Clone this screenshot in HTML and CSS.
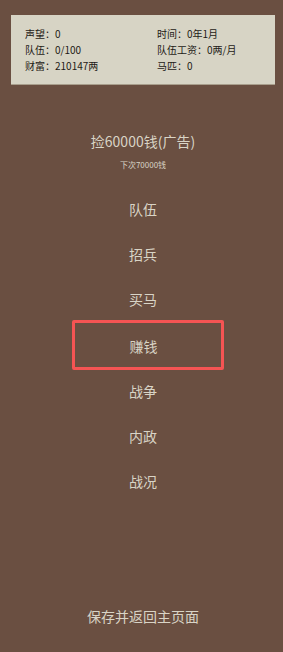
FILE: index.html
```html
<!DOCTYPE html>
<html lang="zh">
<head>
  <meta charset="UTF-8">
  <meta name="viewport" content="width=device-width, initial-scale=1.0">
  <title>主页面</title>
  <link rel="stylesheet" href="styles.css">
</head>
<body>
  <div class="status">
    <div class="status-col">
      <p>声望：0</p>
      <p>队伍：0/100</p>
      <p>财富：210147两</p>
    </div>
    <div class="status-col right">
      <p>时间：0年1月</p>
      <p>队伍工资：0两/月</p>
      <p>马匹：0</p>
    </div>
  </div>

  <div class="ad">
    <div class="ad-title">捡60000钱(广告)</div>
    <div class="ad-next">下次70000钱</div>
  </div>

  <div class="menu">
    <div class="menu-item">队伍</div>
    <div class="menu-item">招兵</div>
    <div class="menu-item">买马</div>
    <div class="menu-item selected">赚钱</div>
    <div class="menu-item">战争</div>
    <div class="menu-item">内政</div>
    <div class="menu-item">战况</div>
  </div>

  <div class="save">保存并返回主页面</div>
</body>
</html>
```

FILE: styles.css
```css
body {
  margin: 0;
  padding: 15px 8px 0 11px;
  height: 652px;
  box-sizing: border-box;
  background-color: #6a4f41;
  font-family: 'Noto Sans CJK SC', 'Noto Sans', sans-serif;
  color: #d9d4c6;
  overflow: hidden;
}
.status {
  display: flex;
  background-color: #d7d4c5;
  border-bottom: 1px solid #a89e8c;
  height: 70px;
  box-sizing: border-box;
  padding: 11px 0 0 14px;
  color: #1e1a16;
  font-size: 10px;
}
.status-col {
  width: 132px;
  flex-shrink: 0;
}
.status-col p {
  margin: 0;
  line-height: 16px;
}
.ad {
  text-align: center;
  margin-top: 44px;
}
.ad-title {
  font-size: 14px;
  line-height: 24px;
}
.ad-next {
  font-size: 8px;
  line-height: 14px;
  margin-top: 5px;
}
.menu {
  display: flex;
  flex-direction: column;
  align-items: center;
  margin-top: 15px;
}
.menu-item {
  font-size: 14px;
  line-height: 45px;
  height: 45px;
  width: 152px;
  text-align: center;
  box-sizing: border-box;
}
.menu-item.selected {
  border: 3px solid #f55453;
  border-radius: 2px;
  line-height: 46px;
  height: 50px;
  margin: -2px 0 -1px 10px;
  padding-right: 9px;
}
.save {
  text-align: center;
  font-size: 14px;
  line-height: 20px;
  margin-top: 102px;
}
```
